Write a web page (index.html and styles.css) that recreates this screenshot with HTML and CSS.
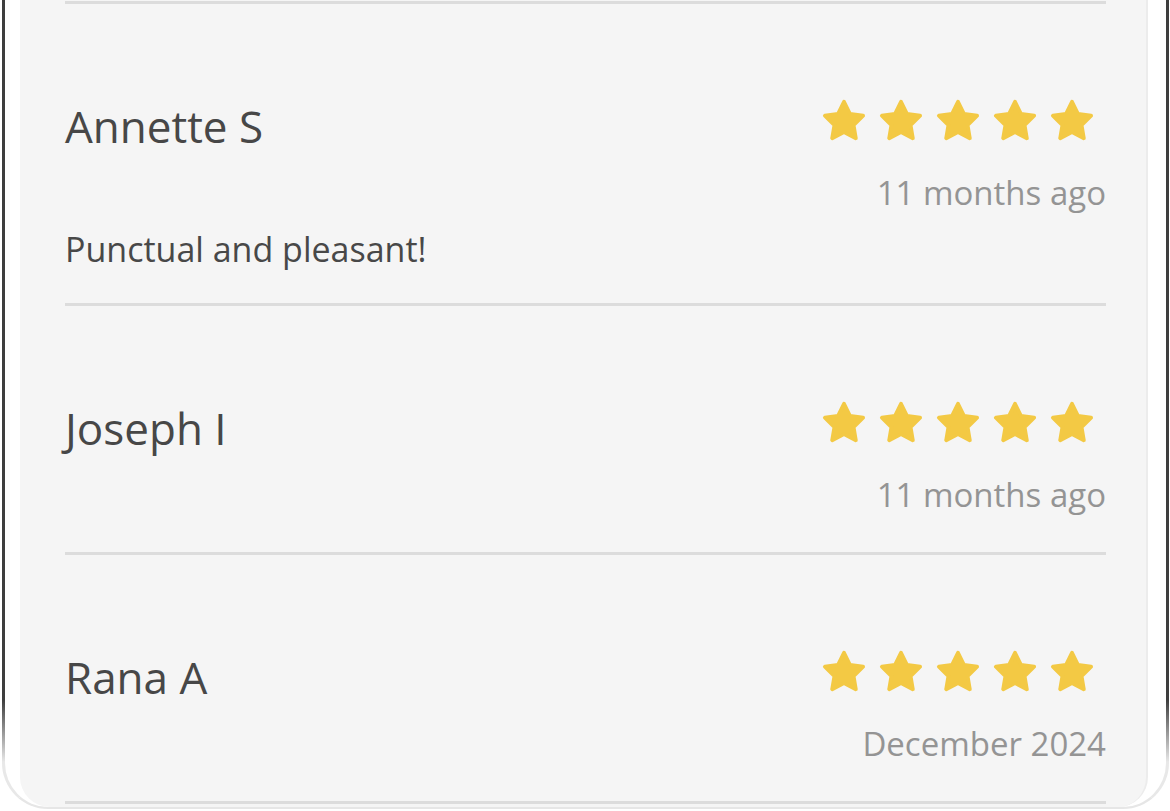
FILE: index.html
```html
<!DOCTYPE html>
<html lang="en">
<head>
<meta charset="utf-8">
<title>Reviews</title>
<link rel="stylesheet" href="styles.css">
</head>
<body>
<svg class="defs" width="0" height="0" aria-hidden="true">
  <defs>
    <symbol id="star" viewBox="0 0 24 23">
      <polygon points="12,2 15.09,8.26 22,9.27 17,14.14 18.18,21.02 12,17.77 5.82,21.02 7,14.14 2,9.27 8.91,8.26" fill="#f3c944" stroke="#f3c944" stroke-width="2" stroke-linejoin="round"/>
    </symbol>
  </defs>
</svg>
<div class="frame">
  <div class="panel">
    <div class="divider"></div>

    <div class="review">
      <div class="head">
        <div class="name">Annette S</div>
        <div class="stars">
          <svg class="star"><use href="#star"/></svg>
          <svg class="star"><use href="#star"/></svg>
          <svg class="star"><use href="#star"/></svg>
          <svg class="star"><use href="#star"/></svg>
          <svg class="star"><use href="#star"/></svg>
        </div>
      </div>
      <div class="date">11 months ago</div>
      <div class="text">Punctual and pleasant!</div>
    </div>

    <div class="review">
      <div class="head">
        <div class="name">Joseph I</div>
        <div class="stars">
          <svg class="star"><use href="#star"/></svg>
          <svg class="star"><use href="#star"/></svg>
          <svg class="star"><use href="#star"/></svg>
          <svg class="star"><use href="#star"/></svg>
          <svg class="star"><use href="#star"/></svg>
        </div>
      </div>
      <div class="date">11 months ago</div>
    </div>

    <div class="review">
      <div class="head">
        <div class="name">Rana A</div>
        <div class="stars">
          <svg class="star"><use href="#star"/></svg>
          <svg class="star"><use href="#star"/></svg>
          <svg class="star"><use href="#star"/></svg>
          <svg class="star"><use href="#star"/></svg>
          <svg class="star"><use href="#star"/></svg>
        </div>
      </div>
      <div class="date">December 2024</div>
    </div>
  </div>
</div>
</body>
</html>
```
FILE: styles.css
```css
html, body {
  margin: 0;
  padding: 0;
  background: #ffffff;
  font-family: "Open Sans", "Noto Sans", sans-serif;
}

.defs {
  position: absolute;
  width: 0;
  height: 0;
}

.frame {
  position: relative;
  box-sizing: border-box;
  height: 809px;
  margin: 0 1px 0 2px;
  border-left: 3px solid #e8e8e8;
  border-right: 3px solid #e8e8e8;
  border-bottom: 2px solid #e6e6e6;
  border-radius: 0 0 46px 46px;
  padding: 0 18px 0 15px;
  display: flex;
  background: #ffffff;
}

.frame::before,
.frame::after {
  content: "";
  position: absolute;
  top: 0;
  width: 3px;
  height: 762px;
  background: linear-gradient(to bottom, #3e3e3e 0, #3e3e3e 700px, #e8e8e8 762px);
}

.frame::before {
  left: -3px;
}

.frame::after {
  right: -3px;
}

.panel {
  flex: 1;
  background: #f5f5f5;
  border-right: 2px solid #ececec;
  border-radius: 0 0 30px 30px;
  padding: 0 40px 0 45px;
  overflow: hidden;
}

.divider {
  height: 3px;
  margin-top: 1px;
  background: #dcdcdc;
}

.review {
  padding: 94px 0 32px;
  border-bottom: 3px solid #dcdcdc;
}

.head {
  display: flex;
  justify-content: space-between;
  align-items: flex-start;
}

.name {
  font-size: 44px;
  line-height: 56px;
  color: #474747;
}

.stars {
  display: flex;
  gap: 11px;
  padding-right: 11px;
}

.star {
  width: 46px;
  height: 44px;
}

.date {
  margin-top: 19px;
  text-align: right;
  font-size: 33px;
  line-height: 40px;
  color: #949494;
}

.review > .date:last-child {
  margin-bottom: 5px;
}

.text {
  margin-top: 14px;
  font-size: 34px;
  line-height: 44px;
  color: #484848;
}
```
